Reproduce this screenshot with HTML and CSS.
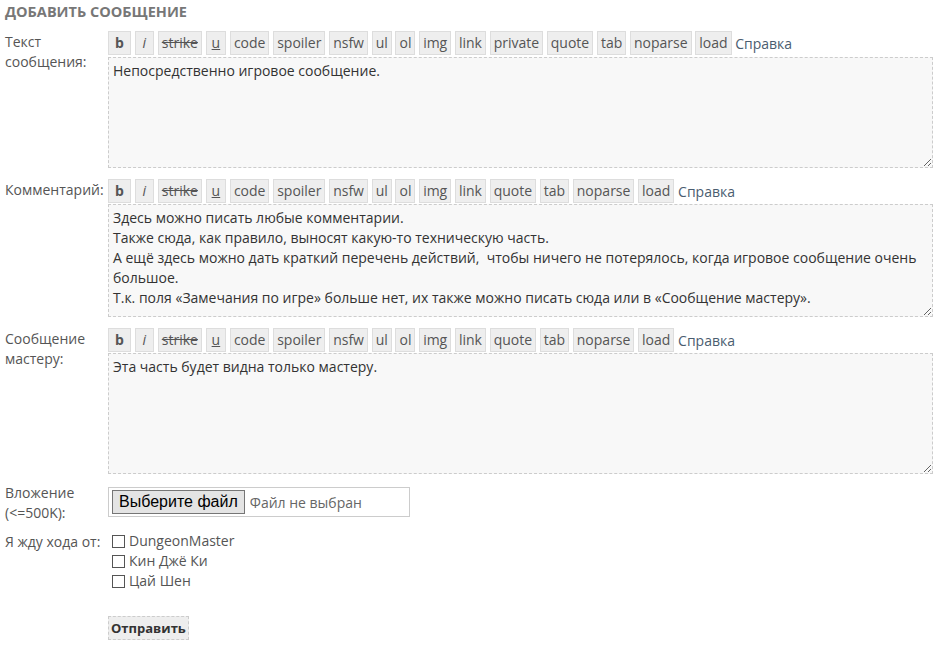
FILE: index.html
```html
<!DOCTYPE html>
<html lang="ru">
<head>
  <meta charset="UTF-8" />
  <title>Добавить сообщение</title>
  <link rel="stylesheet" href="styles.css">
</head>
<body>
  <h3 class="title">Добавить сообщение</h3>

  <form class="post-form">
    <label class="field-label">Текст сообщения:</label>
    <div class="field">
      <div class="toolbar">
        <span class="tag tag-b">b</span>
        <span class="tag tag-i">i</span>
        <span class="tag tag-s">strike</span>
        <span class="tag tag-u">u</span>
        <span class="tag">code</span>
        <span class="tag">spoiler</span>
        <span class="tag">nsfw</span>
        <span class="tag">ul</span>
        <span class="tag">ol</span>
        <span class="tag">img</span>
        <span class="tag">link</span>
        <span class="tag">private</span>
        <span class="tag">quote</span>
        <span class="tag">tab</span>
        <span class="tag">noparse</span>
        <span class="tag">load</span>
        <a class="help" href="#">Справка</a>
      </div>
      <textarea class="text text-main">Непосредственно игровое сообщение.</textarea>
    </div>

    <label class="field-label">Комментарий:</label>
    <div class="field">
      <div class="toolbar toolbar-tight">
        <span class="tag tag-b">b</span>
        <span class="tag tag-i">i</span>
        <span class="tag tag-s">strike</span>
        <span class="tag tag-u">u</span>
        <span class="tag">code</span>
        <span class="tag">spoiler</span>
        <span class="tag">nsfw</span>
        <span class="tag">ul</span>
        <span class="tag">ol</span>
        <span class="tag">img</span>
        <span class="tag">link</span>
        <span class="tag">quote</span>
        <span class="tag">tab</span>
        <span class="tag">noparse</span>
        <span class="tag">load</span>
        <a class="help" href="#">Справка</a>
      </div>
      <textarea class="text text-comment">Здесь можно писать любые комментарии.
Также сюда, как правило, выносят какую-то техническую часть.
А ещё здесь можно дать краткий перечень действий,  чтобы ничего не потерялось, когда игровое сообщение очень большое.
Т.к. поля «Замечания по игре» больше нет, их также можно писать сюда или в «Сообщение мастеру».</textarea>
    </div>

    <label class="field-label">Сообщение мастеру:</label>
    <div class="field">
      <div class="toolbar toolbar-tight">
        <span class="tag tag-b">b</span>
        <span class="tag tag-i">i</span>
        <span class="tag tag-s">strike</span>
        <span class="tag tag-u">u</span>
        <span class="tag">code</span>
        <span class="tag">spoiler</span>
        <span class="tag">nsfw</span>
        <span class="tag">ul</span>
        <span class="tag">ol</span>
        <span class="tag">img</span>
        <span class="tag">link</span>
        <span class="tag">quote</span>
        <span class="tag">tab</span>
        <span class="tag">noparse</span>
        <span class="tag">load</span>
        <a class="help" href="#">Справка</a>
      </div>
      <textarea class="text text-master">Эта часть будет видна только мастеру.</textarea>
    </div>

    <label class="field-label file-label">Вложение (&lt;=500K):</label>
    <div class="field field-file">
      <div class="file-box">
        <span class="file-btn">Выберите файл</span>
        <span class="file-name">Файл не выбран</span>
      </div>
    </div>

    <label class="field-label wait-label">Я жду хода от:</label>
    <div class="field checks">
      <label class="check"><span class="box"></span>DungeonMaster</label>
      <label class="check"><span class="box"></span>Кин Джё Ки</label>
      <label class="check"><span class="box"></span>Цай Шен</label>
    </div>

    <div></div>
    <div class="field submit-row">
      <button type="button" class="submit">Отправить</button>
    </div>
  </form>
</body>
</html>
```

FILE: styles.css
```css
body {
  margin: 0;
  padding: 4px 5px;
  font-family: 'Open Sans', 'Noto Sans', sans-serif;
  font-size: 14px;
  color: #555;
  background: #fff;
}

.title {
  margin: 0 0 11px 0;
  font-size: 14.5px;
  line-height: 16px;
  font-weight: bold;
  text-transform: uppercase;
  color: #777;
}

.post-form {
  display: grid;
  grid-template-columns: 103px 1fr;
  row-gap: 11px;
}

.field-label {
  line-height: 20px;
  padding-top: 1px;
  padding-right: 4px;
}

.field {
  min-width: 0;
}

.toolbar {
  display: flex;
  align-items: center;
  gap: 3.7px;
  height: 24px;
  margin-bottom: 2px;
}

.toolbar-tight {
  margin-bottom: 1px;
}

.tag {
  display: inline-block;
  height: 22px;
  line-height: 22px;
  padding: 0 3px;
  background: #eee;
  border: 1px solid #ddd;
  color: #555;
  box-sizing: content-box;
}

.tag-b {
  font-weight: bold;
  padding: 0 6px;
}

.tag-i {
  font-style: italic;
  padding: 0 7px;
}

.tag-s {
  text-decoration: line-through;
}

.tag-u {
  text-decoration: underline;
  padding: 0 5px;
}

.help {
  color: #4b5d70;
  text-decoration: none;
}

.text {
  display: block;
  width: 100%;
  box-sizing: border-box;
  margin: 0;
  padding: 3px 4px;
  font-family: inherit;
  font-size: 14px;
  line-height: 20px;
  color: #333;
  background: #f8f8f8;
  border: 1px dashed #ccc;
  resize: vertical;
}

.text-main {
  height: 111px;
}

.text-comment {
  height: 113px;
}

.text-master {
  height: 121px;
}

.file-label {
  margin-top: -3px;
}

.field-file {
  padding-top: 2px;
}

.file-box {
  display: inline-flex;
  align-items: center;
  width: 302px;
  height: 30px;
  box-sizing: border-box;
  border: 1px solid #ccc;
  padding: 0 3px;
}

.file-btn {
  font-family: 'Liberation Sans', Arial, sans-serif;
  font-size: 16px;
  color: #000;
  background: #e4e4e4;
  border: 1px solid #767676;
  padding: 1px 6px;
  line-height: 20px;
}

.file-name {
  margin-left: 5px;
  color: #666;
}

.wait-label,
.checks {
  margin-top: -3px;
}

.checks {
  display: flex;
  flex-direction: column;
}

.check {
  display: flex;
  align-items: center;
  line-height: 20px;
  padding-left: 4px;
}

.box {
  display: inline-block;
  width: 11px;
  height: 11px;
  border: 1px solid #555;
  margin-right: 4px;
}

.submit-row {
  padding-top: 14px;
}

.submit {
  font-family: inherit;
  font-size: 13px;
  font-weight: bold;
  color: #333;
  background: #eee;
  border: 1px dashed #ccc;
  padding: 1px 2px;
  line-height: 20px;
}
```
